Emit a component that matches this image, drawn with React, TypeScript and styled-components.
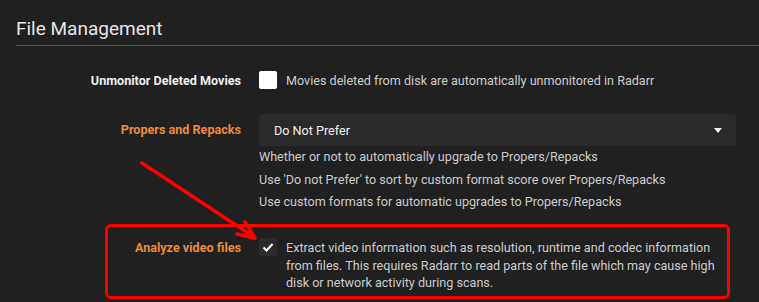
import React from "react";
import styled, { createGlobalStyle } from "styled-components";

const GlobalStyle = createGlobalStyle`
  body {
    margin: 0;
    padding: 0;
    background-color: #202020;
    font-family: Roboto, "Open Sans", "Liberation Sans", sans-serif;
    font-size: 12.6px;
  }
`;

const App: React.FC = () => {
  return (
    <Page>
      <GlobalStyle />
      <Title>File Management</Title>
      <Rule />

      <Row $top={16} $align="center" $minHeight={36}>
        <Label>Unmonitor Deleted Movies</Label>
        <CheckLine>
          <CheckBox $checked={false} />
          <Text>Movies deleted from disk are automatically unmonitored in Radarr</Text>
        </CheckLine>
      </Row>

      <Row $top={16} $align="start">
        <Label $advanced $lineHeight={32}>Propers and Repacks</Label>
        <div>
          <Select>
            <span>Do Not Prefer</span>
            <Caret />
          </Select>
          <Help>Whether or not to automatically upgrade to Propers/Repacks</Help>
          <Help>Use 'Do not Prefer' to sort by custom format score over Propers/Repacks</Help>
          <Help>Use custom formats for automatic upgrades to Propers/Repacks</Help>
        </div>
      </Row>

      <Row $top={25.5} $align="start">
        <Label $advanced $lineHeight={17.5}>Analyze video files</Label>
        <CheckLine $start>
          <CheckBox $checked>
            <svg width="18" height="18" viewBox="0 0 18 18">
              <polyline points="4.5,9.5 7.5,12.5 13.5,6" fill="none" stroke="#fff" strokeWidth="2" />
            </svg>
          </CheckBox>
          <Text $lineHeight={17.5}>
            Extract video information such as resolution, runtime and codec information
            from files. This requires Radarr to read parts of the file which may cause high
            disk or network activity during scans.
          </Text>
        </CheckLine>
      </Row>

      <HighlightBox />
      <ArrowLayer width="759" height="302" viewBox="0 0 759 302">
        <line x1="142" y1="163" x2="254" y2="237" stroke="#ff0000" strokeWidth="3.5" strokeLinecap="round" />
        <polyline
          points="237,234 255,238 245,222"
          fill="none"
          stroke="#ff0000"
          strokeWidth="3.5"
          strokeLinecap="round"
          strokeLinejoin="round"
        />
      </ArrowLayer>
    </Page>
  );
};

export default App;

const Page = styled.div`
  position: relative;
  height: 302px;
  overflow: hidden;
  padding: 17px 23px 0 16px;
  box-sizing: border-box;
`;

const Title = styled.h2`
  margin: 0;
  font-size: 19px;
  font-weight: 400;
  line-height: 24px;
  color: #e6e6e6;
`;

const Rule = styled.div`
  height: 1px;
  margin: 4px -23px 0 0;
  background-color: #4e4e4e;
`;

const Row = styled.div<{ $top: number; $align: string; $minHeight?: number }>`
  display: grid;
  grid-template-columns: 225px 1fr;
  column-gap: 18px;
  margin-top: ${(p) => p.$top}px;
  align-items: ${(p) => p.$align};
  min-height: ${(p) => (p.$minHeight ? `${p.$minHeight}px` : "auto")};
`;

const Label = styled.div<{ $advanced?: boolean; $lineHeight?: number }>`
  text-align: right;
  font-weight: 700;
  font-size: 12.6px;
  line-height: ${(p) => (p.$lineHeight ? `${p.$lineHeight}px` : "normal")};
  color: ${(p) => (p.$advanced ? "#ea8a3b" : "#eeeeee")};
`;

const CheckLine = styled.div<{ $start?: boolean }>`
  display: flex;
  align-items: ${(p) => (p.$start ? "flex-start" : "center")};
  gap: 9px;
`;

const CheckBox = styled.div<{ $checked: boolean }>`
  flex-shrink: 0;
  width: 18px;
  height: 18px;
  margin-top: ${(p) => (p.$checked ? "-1px" : "0")};
  border-radius: 2px;
  background-color: ${(p) => (p.$checked ? "#2b2b2b" : "#ffffff")};
  display: flex;
  align-items: center;
  justify-content: center;
`;

const Text = styled.div<{ $lineHeight?: number }>`
  color: #cccccc;
  font-size: 12.6px;
  line-height: ${(p) => (p.$lineHeight ? `${p.$lineHeight}px` : "normal")};
`;

const Select = styled.div`
  height: 32px;
  box-sizing: border-box;
  padding: 0 14px 0 15px;
  border-radius: 4px;
  background-color: #2a2a2a;
  color: #f2f2f2;
  font-size: 12.6px;
  display: flex;
  align-items: center;
  justify-content: space-between;
`;

const Caret = styled.div`
  width: 0;
  height: 0;
  border-left: 4px solid transparent;
  border-right: 4px solid transparent;
  border-top: 5px solid #ffffff;
`;

const Help = styled.div`
  color: #cccccc;
  font-size: 12.6px;
  line-height: 22.5px;
  &:first-of-type {
    margin-top: 1px;
  }
`;

const HighlightBox = styled.div`
  position: absolute;
  left: 105px;
  top: 224px;
  width: 625px;
  height: 75px;
  box-sizing: border-box;
  border: 3px solid #ff0000;
  border-radius: 6px;
  pointer-events: none;
`;

const ArrowLayer = styled.svg`
  position: absolute;
  left: 0;
  top: 0;
  pointer-events: none;
`;
